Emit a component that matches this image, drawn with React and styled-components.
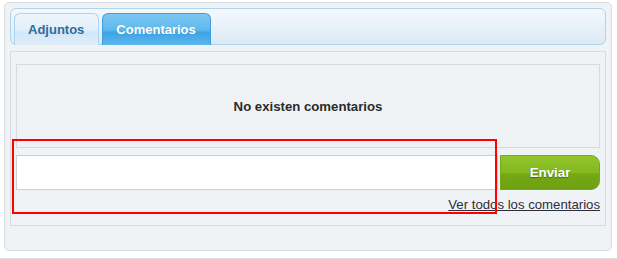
import React from "react";
import styled, { createGlobalStyle } from "styled-components";

const Global = createGlobalStyle`
  html, body { margin: 0; padding: 0; background: #ffffff; }
  body { font-family: "Liberation Sans", Arial, sans-serif; font-size: 13px; color: #333; }
`;

const Page = styled.div`
  position: relative;
  width: 617px;
  height: 259px;
  box-sizing: border-box;
  padding: 2px 5px 0 4px;
  border-bottom: 1px solid #dddddd;
`;

const Panel = styled.div`
  box-sizing: border-box;
  height: 249px;
  border: 1px solid #dadde0;
  border-radius: 5px;
  background: #f0f3f6;
  padding: 5px 5px 0 5px;
  display: flex;
  flex-direction: column;
`;

const TabBar = styled.div`
  box-sizing: border-box;
  height: 37px;
  border: 1px solid #acd3f0;
  border-radius: 6px;
  background: linear-gradient(#f4f8fc, #dceaf6);
  padding: 4px 3px 0 3px;
  display: flex;
  align-items: flex-end;
  gap: 3px;
`;

const Tab = styled.div`
  box-sizing: border-box;
  height: 32px;
  margin-bottom: -1px;
  padding: 0 14px 0 13px;
  display: flex;
  align-items: center;
  font-weight: bold;
  font-size: 13px;
  border-radius: 6px 6px 0 0;
  border: 1px solid ${p => (p.$active ? "#3f9de0" : "#acd3f0")};
  border-bottom: none;
  color: ${p => (p.$active ? "#ffffff" : "#2f6c9a")};
  background: ${p =>
    p.$active
      ? "linear-gradient(#7cc7f1 0%, #5fb9ed 50%, #3fa3e3 60%, #5ab7ec 100%)"
      : "linear-gradient(#edf5fc 0%, #e3effa 50%, #d2e6f6 60%, #e0eefa 100%)"};
  text-shadow: ${p => (p.$active ? "0 0 1px rgba(0,0,0,0.15)" : "none")};
`;

const Content = styled.div`
  box-sizing: border-box;
  margin-top: 6px;
  height: 175px;
  border: 1px solid #d9dcde;
  background: #f0f3f6;
  padding: 12px 5px 0 5px;
  display: flex;
  flex-direction: column;
`;

const EmptyBox = styled.div`
  box-sizing: border-box;
  height: 84px;
  border: 1px solid #d9dcde;
  display: flex;
  align-items: center;
  justify-content: center;
  font-weight: bold;
  font-size: 13.2px;
  color: #2b2b2b;
`;

const FormRow = styled.div`
  margin-top: 7px;
  display: flex;
  gap: 2px;
  height: 35px;
`;

const Input = styled.input`
  box-sizing: border-box;
  flex: 1;
  height: 35px;
  border: 1px solid #cfcfcf;
  background: #ffffff;
  outline: none;
  padding: 0 6px;
  font-family: inherit;
`;

const SendButton = styled.button`
  box-sizing: border-box;
  width: 100px;
  height: 35px;
  border: 1px solid #76a91a;
  border-radius: 0 9px 9px 0;
  background: linear-gradient(#92c52b 0%, #83b81f 50%, #74a814 55%, #6da112 100%);
  color: #ffffff;
  font-family: inherit;
  font-weight: bold;
  font-size: 13.3px;
  text-shadow: 0 1px 1px rgba(0, 0, 0, 0.35);
  cursor: pointer;
`;

const LinkRow = styled.div`
  display: flex;
  justify-content: flex-end;
  margin-top: 7px;
`;

const Link = styled.a`
  color: #2e2e3a;
  font-size: 13.2px;
  text-decoration: underline;
  line-height: 15px;
`;

const Highlight = styled.div`
  position: absolute;
  left: 12px;
  top: 139px;
  width: 485px;
  height: 75px;
  box-sizing: border-box;
  border: 2px solid #ff0000;
  pointer-events: none;
`;

export default function App() {
  return (
    <>
      <Global />
      <Page>
        <Panel>
          <TabBar>
            <Tab>Adjuntos</Tab>
            <Tab $active>Comentarios</Tab>
          </TabBar>
          <Content>
            <EmptyBox>No existen comentarios</EmptyBox>
            <FormRow>
              <Input type="text" />
              <SendButton>Enviar</SendButton>
            </FormRow>
            <LinkRow>
              <Link href="#">Ver todos los comentarios</Link>
            </LinkRow>
          </Content>
        </Panel>
        <Highlight />
      </Page>
    </>
  );
}
